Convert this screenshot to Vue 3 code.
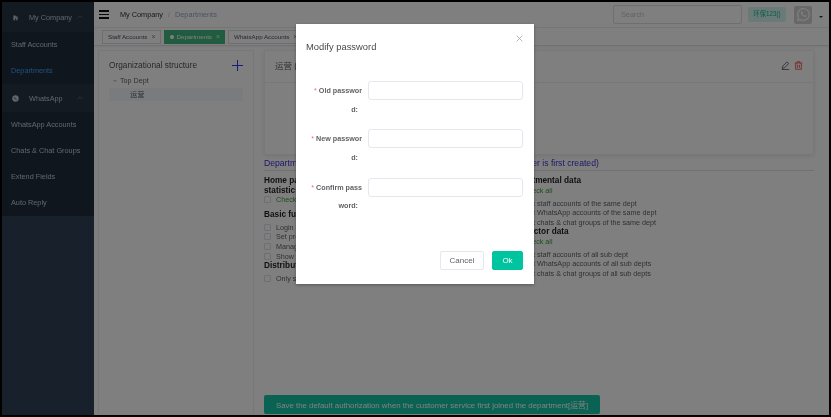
<script setup>
const subA = [{ t: 'Staff Accounts' }, { t: 'Departments', active: true }]
const subB = ['WhatsApp Accounts', 'Chats & Chat Groups', 'Extend Fields', 'Auto Reply']
const tabs = [
  { t: 'Staff Accounts' },
  { t: 'Departments', active: true },
  { t: 'WhatsApp Accounts' }
]
const basic = ['Login', 'Set profile', 'Manage account', 'Show data']
const deptItems = [
  'Select staff accounts of the same dept',
  'Select WhatsApp accounts of the same dept',
  'Select chats & chat groups of the same dept'
]
const subItems = [
  'Select staff accounts of all sub dept',
  'Select WhatsApp accounts of all sub depts',
  'Select chats & chat groups of all sub depts'
]
const fields = [
  ['Old passwor', 'd:'],
  ['New passwor', 'd:'],
  ['Confirm pass', 'word:']
]
</script>

<template>
  <div class="frame">
    <aside class="sidebar">
      <div class="menu-title first">
        <svg class="m-icon" viewBox="0 0 10 10"><path d="M2 9V2h3v1.5h3V9H6V6H4.5v3z" fill="#bfcbd9" /></svg>
        <span>My Company</span>
        <svg class="chev" viewBox="0 0 10 6"><path d="M1 5l4-4 4 4" fill="none" stroke="#bfcbd9" stroke-width="1" /></svg>
      </div>
      <div v-for="s in subA" :key="s.t" class="menu-item" :class="{ active: s.active }">{{ s.t }}</div>
      <div class="menu-title">
        <svg class="m-icon" viewBox="0 0 10 10"><circle cx="5" cy="5" r="4.6" fill="#bfcbd9" /><path d="M3.4 3.2c.5 1.8 1.5 2.9 3.2 3.5" fill="none" stroke="#263445" stroke-width="1.1" /></svg>
        <span>WhatsApp</span>
        <svg class="chev" viewBox="0 0 10 6"><path d="M1 5l4-4 4 4" fill="none" stroke="#bfcbd9" stroke-width="1" /></svg>
      </div>
      <div v-for="s in subB" :key="s" class="menu-item">{{ s }}</div>
    </aside>

    <div class="main">
      <header class="topbar">
        <div class="burger"><i></i><i></i><i></i></div>
        <span class="crumb">My Company</span>
        <span class="sep">/</span>
        <span class="crumb-cur">Departments</span>
        <div class="search">Search</div>
        <div class="env">环保123()</div>
        <div class="avatar">
          <svg viewBox="0 0 24 24" width="15" height="15">
            <path d="M12 2.5a9.4 9.4 0 0 0-8 14.3L2.8 21.5l4.8-1.2A9.4 9.4 0 1 0 12 2.5z" fill="none" stroke="#fff" stroke-width="1.8" />
            <path d="M8.6 7.3c-.8.7-1 2-.4 3.4 1 2.4 2.8 4.1 5.2 5 1.3.5 2.6.2 3.2-.8.3-.5.3-1 .2-1.2l-2.2-1.1-1 1.2c-1.4-.5-2.7-1.7-3.4-3.2l.9-1-.9-2.3z" fill="#fff" />
          </svg>
        </div>
        <span class="caret"></span>
      </header>

      <nav class="tabs">
        <div v-for="t in tabs" :key="t.t" class="tab" :class="{ active: t.active }">
          <i v-if="t.active" class="dot"></i>{{ t.t }}<span class="x">×</span>
        </div>
      </nav>

      <div class="content">
        <section class="tree">
          <div class="tree-head">
            <span>Organizational structure</span>
            <svg viewBox="0 0 11 11" width="11" height="11"><path d="M5.5 0v11M0 5.5h11" stroke="#3434ff" stroke-width="1" /></svg>
          </div>
          <div class="tree-root"><i class="tree-caret"></i>Top Dept</div>
          <div class="tree-child">运营</div>
        </section>

        <section class="detail">
          <div class="card">
            <div class="card-head">
              <span>运营 (0)</span>
              <div class="card-icons">
                <svg viewBox="0 0 12 12" width="9" height="9"><path d="M7.8 1.2l2.4 2.2-5.6 5.7-3 .8.7-3zM1 11.3h10" fill="none" stroke="#555" stroke-width="1.1" /></svg>
                <svg viewBox="0 0 12 12" width="9" height="9"><path d="M1 2.7h10M4 2.5V1h4v1.5M2.2 2.8V11h7.6V2.8M4.8 5v4M7.2 5v4" fill="none" stroke="#f04c4c" stroke-width="1.2" /></svg>
              </div>
            </div>
            <div class="card-body"></div>
          </div>

          <div class="note">Department members' default data authorization settings (when the user is first created)</div>

          <div class="perm">
            <div class="col">
              <h4>Home page statistics</h4>
              <label class="chk green"><i></i>Check all</label>
              <h4 class="gap">Basic functions</h4>
              <label v-for="b in basic" :key="b" class="chk"><i></i>{{ b }}</label>
              <h4 class="tight">Distribution</h4>
              <label class="chk single"><i></i>Only self</label>
            </div>
            <div class="col right">
              <h4 class="one">Departmental data</h4>
              <label class="chk green after"><i></i>Check all</label>
              <label v-for="d in deptItems" :key="d" class="chk"><i></i>{{ d }}</label>
              <h4 class="one">Subsector data</h4>
              <label class="chk green after"><i></i>Check all</label>
              <label v-for="d in subItems" :key="d" class="chk"><i></i>{{ d }}</label>
            </div>
          </div>

          <div class="save-row">
            <button class="save">Save the default authorization when the customer service first joined the department[运营]</button>
          </div>
        </section>
      </div>
    </div>

    <div class="overlay">
      <div class="modal">
        <div class="modal-head">
          <span>Modify password</span>
          <svg viewBox="0 0 8 8" width="7" height="7"><path d="M.7.7l6.6 6.6M7.3.7L.7 7.3" stroke="#a5a5a5" stroke-width=".9" /></svg>
        </div>
        <form class="form">
          <div v-for="f in fields" :key="f[0]" class="field">
            <div class="label">
              <div><b class="star">*</b> {{ f[0] }}</div>
              <div class="cont">{{ f[1] }}</div>
            </div>
            <input class="input" type="password" />
          </div>
        </form>
        <div class="modal-foot">
          <button type="button" class="btn">Cancel</button>
          <button type="button" class="btn ok">Ok</button>
        </div>
      </div>
    </div>
  </div>
</template>

<style>
html, body { margin: 0; background: #000; overflow: hidden; }
</style>

<style scoped>
* { box-sizing: border-box; }
.frame {
  position: relative;
  display: flex;
  width: 831px;
  height: 417px;
  border: 2px solid #000;
  overflow: hidden;
  background: #fff;
  font-family: "Liberation Sans", Arial, sans-serif;
  color: #606266;
  filter: blur(.35px);
}
.sidebar { width: 92px; flex: none; background: #304158; font-size: 7.3px; color: #bfcbd9; }
.menu-title {
  height: 28px;
  display: flex;
  align-items: center;
  padding-left: 10px;
  background: #263445;
  white-space: nowrap;
}
.menu-title.first { height: 30px; }
.m-icon { width: 7px; height: 7px; margin-right: 10px; flex: none; }
.chev { width: 6px; height: 4px; margin-left: auto; margin-right: 11px; opacity: .55; }
.menu-item {
  height: 26px;
  line-height: 26px;
  padding-left: 9px;
  background: #1f2d3d;
  white-space: nowrap;
}
.menu-item.active { color: #409eff; }
.main { flex: 1; min-width: 0; display: flex; flex-direction: column; }
.topbar {
  height: 26px;
  flex: none;
  display: flex;
  align-items: center;
  padding-left: 5px;
  border-bottom: 1px solid #ececec;
  font-size: 7.3px;
}
.burger { width: 10px; display: flex; flex-direction: column; gap: 2px; margin-right: 11px; }
.burger i { display: block; height: 1.6px; background: #111; }
.crumb { color: #303133; }
.sep { color: #c0c4cc; margin: 0 5px; }
.crumb-cur { color: #97a8be; }
.search {
  margin-left: auto;
  width: 129px;
  height: 19px;
  line-height: 17px;
  padding-left: 7px;
  border: 1px solid #dcdfe6;
  border-radius: 2px;
  color: #c0c4cc;
  background: #fff;
}
.env {
  margin-left: 6px;
  width: 38px;
  height: 15px;
  line-height: 14px;
  text-align: center;
  background: #d4f5ef;
  border-radius: 2px;
  color: #11b595;
  font-size: 6.3px;
  font-family: "Liberation Sans", "Noto Sans CJK SC", sans-serif;
}
.avatar {
  width: 18px;
  height: 18px;
  margin-left: 8px;
  background: #d0d0d0;
  display: flex;
  align-items: center;
  justify-content: center;
  border-radius: 2px;
}
.caret {
  width: 0;
  height: 0;
  margin: 7px 6px 0 7px;
  border: 2px solid transparent;
  border-top-color: #333;
}
.tabs {
  height: 18px;
  flex: none;
  display: flex;
  align-items: center;
  gap: 3px;
  padding-left: 8px;
  border-bottom: 1px solid #e3e3e3;
  box-shadow: 0 1px 2px rgba(0, 0, 0, .06);
  overflow: hidden;
}
.tab {
  height: 14px;
  flex: none;
  display: flex;
  align-items: center;
  padding: 0 4px 0 5px;
  background: #fff;
  border: 1px solid #d8dce5;
  font-size: 6.2px;
  color: #495060;
  white-space: nowrap;
}
.tab.active { background: #42b983; border-color: #42b983; color: #fff; }
.dot { width: 4px; height: 4px; border-radius: 50%; background: #fff; margin-right: 3px; }
.x { margin-left: 4px; font-size: 7px; opacity: .75; }
.content { flex: 1; min-height: 0; display: flex; padding: 4px 15px 1px 4px; gap: 10px; }
.tree {
  width: 156px;
  flex: none;
  border: 1px solid #efefef;
  border-bottom: 0;
  padding: 7px 10px 0;
  font-size: 7.2px;
}
.tree-head {
  display: flex;
  justify-content: space-between;
  align-items: center;
  font-size: 8.3px;
  height: 14px;
  color: #4e5156;
}
.tree-root { height: 15px; display: flex; align-items: center; margin-top: 1px; color: #606266; padding-left: 4px; }
.tree-caret {
  width: 0;
  height: 0;
  border: 2.5px solid transparent;
  border-top-color: #c0c4cc;
  border-bottom: 0;
  margin-right: 3px;
}
.tree-child {
  height: 13px;
  line-height: 13px;
  padding-left: 21px;
  background: #f5f7fa;
  font-family: "Liberation Sans", "Noto Sans CJK SC", sans-serif;
}
.detail { flex: 1; min-width: 0; display: flex; flex-direction: column; }
.card {
  height: 105px;
  flex: none;
  background: #fff;
  border: 1px solid #f0f0f0;
  box-shadow: 0 1px 5px rgba(0, 0, 0, .1);
}
.card-head {
  height: 32px;
  display: flex;
  justify-content: space-between;
  align-items: center;
  padding: 0 10px 3px;
  border-bottom: 1px solid #eee;
  font-size: 8.5px;
  font-family: "Liberation Sans", "Noto Sans CJK SC", sans-serif;
}
.card-icons { display: flex; gap: 4px; }
.note {
  margin-top: 1px;
  height: 15px;
  line-height: 14px;
  font-size: 8.65px;
  color: #3a2fd0;
  border-bottom: 1px solid #e2e2e2;
  white-space: nowrap;
}
.perm { display: flex; padding-top: 5px; }
.col { width: 239px; flex: none; font-size: 7.2px; }
.col h4 {
  margin: 0;
  font-size: 8.25px;
  line-height: 9.5px;
  font-weight: 700;
  color: #222;
  width: 50px;
}
.col h4.one { width: auto; height: 9.5px; white-space: nowrap; padding-left: 6px; }
.col h4.gap { margin-top: 5.5px; margin-bottom: 2.5px; width: auto; white-space: nowrap; }
.col h4.tight { width: auto; white-space: nowrap; }
.chk { display: flex; align-items: center; height: 9.7px; white-space: nowrap; color: #606266; }
.chk i {
  display: block;
  width: 7px;
  height: 7px;
  border: 1px solid #dcdfe6;
  background: #fff;
  margin-right: 5px;
  flex: none;
  border-radius: 1px;
}
.chk.green { color: #3a9a3a; }
.chk.after { margin-bottom: 3px; margin-left: 8px; }
.chk.single { margin-top: 3px; }
.save-row { margin-top: auto; }
.save {
  display: block;
  width: 336px;
  height: 19px;
  padding: 0;
  border: 0;
  border-radius: 2px;
  background: #13c5a4;
  color: #fff;
  font-family: "Liberation Sans", "Noto Sans CJK SC", sans-serif;
  font-size: 7.85px;
  white-space: nowrap;
}
.overlay { position: absolute; inset: -2px; background: rgba(0, 0, 0, .5); }
.modal {
  width: 238px;
  height: 260px;
  margin: 24px 0 0 296px;
  background: #fff;
  box-shadow: 0 1px 3px rgba(0, 0, 0, .3);
  display: flex;
  flex-direction: column;
}
.modal-head {
  display: flex;
  justify-content: space-between;
  align-items: flex-start;
  padding: 16px 11px 0 10px;
  height: 57px;
  font-size: 9.4px;
  color: #4a4a4a;
}
.modal-head span { line-height: 14px; }
.modal-head svg { margin-top: -5px; }
.form { display: flex; flex-direction: column; }
.field { display: flex; height: 48.4px; }
.label {
  width: 72px;
  padding: 1px 6px 0 0;
  font-size: 7.2px;
  font-weight: 700;
  color: #606266;
  text-align: right;
  line-height: 18.6px;
}
.label .cont { padding-right: 4px; }
.star { color: #f56c6c; font-weight: 400; }
.input {
  width: 155px;
  height: 19px;
  padding: 0;
  border: 1px solid #e4e7ed;
  border-radius: 3px;
  background: #fff;
  outline: none;
}
.modal-foot { margin-top: auto; padding: 0 11px 14px; display: flex; justify-content: flex-end; gap: 8px; }
.btn {
  height: 19px;
  width: 44px;
  padding: 0;
  border: 1px solid #e4e7ed;
  border-radius: 2px;
  background: #fff;
  color: #606266;
  font-size: 8px;
  font-family: "Liberation Sans", Arial, sans-serif;
}
.btn.ok { width: 31px; background: #00c4a0; border-color: #00c4a0; color: #fff; }
</style>
